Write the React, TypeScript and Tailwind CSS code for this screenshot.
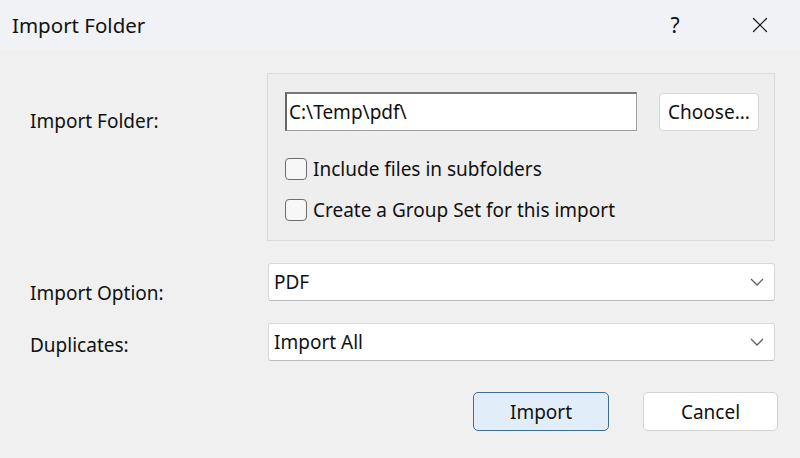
import { X } from "lucide-react";

const font = { fontFamily: '"Noto Sans", "Open Sans", sans-serif' };

function Chevron() {
  return (
    <svg width="14" height="8" viewBox="0 0 14 8" fill="none" className="text-[#606060]">
      <path d="M1 1l6 6 6-6" stroke="currentColor" strokeWidth="1.3" />
    </svg>
  );
}

function Select({ value }: { value: string }) {
  return (
    <div className="flex h-[38px] w-[507px] items-center justify-between rounded-[3px] border border-[#d9d9d9] border-b-[#bdbdbd] bg-white pl-[5px] pr-[10px]">
      <span>{value}</span>
      <Chevron />
    </div>
  );
}

function Check({ label }: { label: string }) {
  return (
    <label className="flex items-center gap-[6px]">
      <span className="h-[22px] w-[22px] rounded-[4px] border-[1.5px] border-[#6e6e6e] bg-[#f7f7f7]" />
      <span>{label}</span>
    </label>
  );
}

export default function App() {
  return (
    <div className="h-[458px] w-[800px] bg-[#f0f0f0] text-[19px] leading-[24px] text-[#111]" style={font}>
      <div className="flex h-[50px] items-center justify-between bg-[#f0f2f6] pl-[12px]">
        <span className="text-[20.5px]">Import Folder</span>
        <div className="flex items-center">
          <span className="w-[40px] text-center text-[21px]">?</span>
          <span className="ml-[45px] flex w-[40px] justify-center">
            <X className="h-[26px] w-[26px]" strokeWidth={1.1} />
          </span>
          <span className="w-[20px]" />
        </div>
      </div>

      <div className="flex pl-[30px] pt-[23px]">
        <div className="w-[237px] pt-[36px]">Import Folder:</div>
        <div className="h-[168px] w-[508px] border border-[#dadada] bg-[#eeeeee] pl-[17px] pt-[18px]">
          <div className="flex items-center gap-[22px]">
            <div className="flex h-[39px] w-[352px] items-center border border-[#a0a0a0] border-l-[2px] border-t-[2px] border-l-[#666] border-t-[#777] bg-white pl-[2px]">
              C:\Temp\pdf\
            </div>
            <button className="h-[38px] w-[100px] rounded-[4px] border border-[#d6d6d6] bg-white">Choose...</button>
          </div>
          <div className="mt-[26px] flex flex-col gap-[17px]">
            <Check label="Include files in subfolders" />
            <Check label="Create a Group Set for this import" />
          </div>
        </div>
      </div>

      <div className="mt-[22px] flex items-center pl-[30px]">
        <div className="w-[238px] translate-y-[11px]">Import Option:</div>
        <Select value="PDF" />
      </div>
      <div className="mt-[22px] flex items-center pl-[30px]">
        <div className="w-[238px] translate-y-[3px]">Duplicates:</div>
        <Select value="Import All" />
      </div>

      <div className="mt-[31px] flex justify-end gap-[34px] pr-[22px]">
        <button className="h-[39px] w-[136px] rounded-[5px] border-[1.5px] border-[#3d6e96] bg-[#e1eef9]">Import</button>
        <button className="h-[39px] w-[135px] rounded-[5px] border border-[#d3d3d3] bg-white">Cancel</button>
      </div>
    </div>
  );
}
